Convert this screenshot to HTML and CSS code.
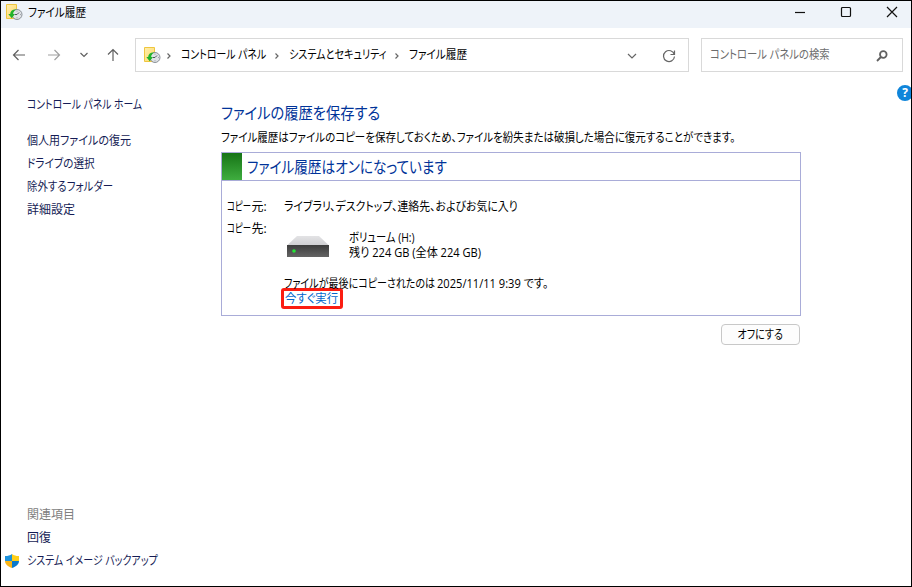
FILE: index.html
```html
<!DOCTYPE html>
<html lang="ja">
<head>
    <meta charset="UTF-8">
    <meta name="viewport" content="width=device-width, initial-scale=1.0">
    <title>ファイル履歴</title>
    <link rel="stylesheet" href="styles.css">
</head>
<body>
    <svg class="defs" width="0" height="0">
        <defs>
            <linearGradient id="folderFill" x1="0" y1="0" x2="1" y2="1">
                <stop offset="0" stop-color="#ffeeae"/>
                <stop offset="1" stop-color="#ffd968"/>
            </linearGradient>
            <symbol id="historyIcon" viewBox="0 0 17 17">
                <path d="M.5.5h10v14H.5z" fill="url(#folderFill)" stroke="#eec63f" stroke-width="1"/>
                <circle cx="11" cy="10.500" r="5" fill="#dfe2e6" stroke="#8b9198" stroke-width="1"/>
                <path d="M11 10.500l2-2M11 10.500H9" fill="none" stroke="#4d535a" stroke-width="1"/>
                <path d="M11 6.800v.8M11 13.400v.8M14 10.500h.8" fill="none" stroke="#7b8188" stroke-width=".8"/>
                <path d="M10.500 5.500C6.500 5 4.200 7 4.200 10H2.300l3.400 4.300L9 10H7.200c0-2 1-3.500 3.300-4.500z" fill="#22b32b" stroke="none"/>
            </symbol>
        </defs>
    </svg>

    <div class="window">
        <header class="titlebar">
            <svg class="app-icon" width="17" height="17"><use href="#historyIcon"/></svg>
            <span class="text window-title">ファイル履歴</span>
            <div class="window-buttons">
                <svg width="12" height="12" viewBox="0 0 12 12"><path d="M1 6.500h10"/></svg>
                <svg width="12" height="12" viewBox="0 0 12 12"><rect x="1.500" y="1.500" width="9" height="9" rx="1"/></svg>
                <svg width="12" height="12" viewBox="0 0 12 12"><path d="M1 1l10 10M11 1L1 11"/></svg>
            </div>
        </header>

        <nav class="toolbar">
            <div class="nav-buttons">
                <svg width="14" height="14" viewBox="0 0 14 14"><path d="M13 7H1.500M6.500 2l-5 5 5 5"/></svg>
                <svg class="disabled" width="14" height="14" viewBox="0 0 14 14"><path d="M1 7h11.500M7.500 2l5 5-5 5"/></svg>
                <svg class="small" width="10" height="14" viewBox="0 0 10 14"><path d="M1.500 5L5 8.500 8.500 5"/></svg>
                <svg width="14" height="14" viewBox="0 0 14 14"><path d="M7 13V1.500M2 6.500l5-5 5 5"/></svg>
            </div>
            <div class="address">
                <svg width="17" height="17"><use href="#historyIcon"/></svg>
                <svg class="crumb-arrow" width="6" height="8" viewBox="0 0 6 8"><path d="M1.500 1.500L4 4 1.500 6.500"/></svg>
                <span class="text crumb-panel">コントロール パネル</span>
                <svg class="crumb-arrow" width="6" height="8" viewBox="0 0 6 8"><path d="M1.500 1.500L4 4 1.500 6.500"/></svg>
                <span class="text crumb-system">システムとセキュリティ</span>
                <svg class="crumb-arrow" width="6" height="8" viewBox="0 0 6 8"><path d="M1.500 1.500L4 4 1.500 6.500"/></svg>
                <span class="text crumb-history">ファイル履歴</span>
                <svg class="drop" width="10" height="8" viewBox="0 0 10 8"><path d="M1 2l4 4 4-4"/></svg>
                <svg class="refresh" width="14" height="14" viewBox="0 0 14 14"><path d="M12.300 5.500A5.500 5.500 0 1 0 12.500 7.500M12.500 1.500v4h-4"/></svg>
            </div>
            <div class="search">
                <span class="text search-text">コントロール パネルの検索</span>
                <svg width="12" height="12" viewBox="0 0 12 12"><circle cx="7.300" cy="4.500" r="3.300"/><path d="M4.900 7L1 11"/></svg>
            </div>
        </nav>

        <div class="content">
            <aside class="sidebar">
                <a class="text home">コントロール パネル ホーム</a>
                <a class="text restore">個人用ファイルの復元</a>
                <a class="text drive">ドライブの選択</a>
                <a class="text exclude">除外するフォルダー</a>
                <a class="text">詳細設定</a>
                <div class="related">
                    <span class="related-title">関連項目</span>
                    <a class="text">回復</a>
                    <a class="backup">
                        <svg width="14" height="14" viewBox="0 0 14 14">
                            <path d="M7 0C5 1.500 3 2 0 2v5h7z" fill="#1d92dc"/>
                            <path d="M7 0c2 1.500 4 2 7 2v5H7z" fill="#ffcf19"/>
                            <path d="M0 7c0 3.500 3 5.500 7 7V7z" fill="#f9b418"/>
                            <path d="M14 7c0 3.500-3 5.500-7 7V7z" fill="#0b79cb"/>
                        </svg>
                        <span class="text backup-text">システム イメージ バックアップ</span>
                    </a>
                </div>
            </aside>

            <main class="main">
                <h1><span class="text heading">ファイルの履歴を保存する</span></h1>
                <p class="lead"><span class="text lead-text">ファイル履歴はファイルのコピーを保存しておくため、ファイルを紛失または破損した場合に復元することができます。</span></p>
                <section class="status">
                    <div class="status-head">
                        <span class="status-mark"></span>
                        <span class="text status-title">ファイル履歴はオンになっています</span>
                    </div>
                    <div class="status-body">
                        <div class="row">
                            <span class="label"><span class="text copy">コピー</span>元:</span>
                            <span class="text sources">ライブラリ、デスクトップ、連絡先、およびお気に入り</span>
                        </div>
                        <div class="row target">
                            <span class="label"><span class="text copy">コピー</span>先:</span>
                            <div class="target-drive">
                                <svg width="42" height="23" viewBox="0 0 42 23">
                                    <defs>
                                        <linearGradient id="driveTop" x1="0" y1="0" x2="0" y2="1">
                                            <stop offset="0" stop-color="#e3e3e5"/>
                                            <stop offset="1" stop-color="#d0d0d3"/>
                                        </linearGradient>
                                        <linearGradient id="driveFront" x1="0" y1="0" x2="0" y2="1">
                                            <stop offset="0" stop-color="#3d3d3d"/>
                                            <stop offset="1" stop-color="#646464"/>
                                        </linearGradient>
                                    </defs>
                                    <path d="M10 0h22l9.500 9H.5z" fill="url(#driveTop)"/>
                                    <path d="M0 9h42v12H0z" fill="url(#driveFront)"/>
                                    <circle cx="7" cy="15" r="1.800" fill="#23e436"/>
                                </svg>
                                <div class="drive-info">
                                    <span class="text volume">ボリューム (H:)</span>
                                    <span class="text space">残り 224 GB (全体 224 GB)</span>
                                </div>
                            </div>
                        </div>
                        <div class="last-copy">
                            <div class="last-text">
                                <span class="text last-label">ファイルが最後にコピーされたのは</span>
                                <span class="text last-date">2025/11/11 9:39 です。</span>
                            </div>
                            <a class="run-now"><span class="text run-text">今すぐ実行</span></a>
                        </div>
                    </div>
                </section>
                <div class="actions">
                    <button><span class="text off-text">オフにする</span></button>
                </div>
            </main>
            <span class="help">?</span>
        </div>
    </div>
</body>
</html>
```

FILE: styles.css
```css
* {
    box-sizing: border-box;
}
body {
    margin: 0;
    font-family: "Open Sans", "Noto Sans CJK JP", sans-serif;
    font-size: 12px;
    line-height: 16px;
    font-feature-settings: "palt";
    white-space: nowrap;
    color: #000;
}
h1, p {
    margin: 0;
    font-weight: normal;
}
svg {
    display: block;
    flex: none;
    fill: none;
    stroke-width: 1.2;
}
.defs {
    position: absolute;
}

/* Condensed UI lettering, narrower where a text is mostly kana */
.text {
    display: inline-block;
    flex: none;
    transform-origin: left center;
}
.window-title,
.crumb-history {
    transform: scaleX(0.885);
}
.crumb-panel {
    width: 88px;
    transform: scaleX(0.825);
}
.crumb-system {
    width: 100px;
    transform: scaleX(0.838);
}
.search-text {
    transform: scaleX(0.862);
}
.home {
    transform: scaleX(0.818);
}
.restore {
    transform: scaleX(0.92);
}
.drive {
    transform: scaleX(0.883);
}
.exclude {
    transform: scaleX(0.87);
}
.backup-text {
    transform: scaleX(0.83);
}
.heading {
    transform: scaleX(0.892);
}
.lead-text {
    transform: scaleX(0.874);
}
.status-title {
    transform: scaleX(0.852);
}
.copy {
    margin-right: -10px;
    transform: scaleX(0.7);
}
.sources {
    transform: scaleX(0.907);
}
.volume {
    transform: scaleX(0.857);
}
.space {
    transform: scaleX(0.925);
}
.last-label {
    width: 153px;
    transform: scaleX(0.835);
}
.last-date {
    transform: scaleX(0.925);
}
.run-text {
    transform: scaleX(0.95);
}
.off-text {
    transform: scaleX(0.84);
    transform-origin: center;
}

.window {
    display: flex;
    flex-direction: column;
    width: 912px;
    height: 587px;
    border: 1px solid #000;
    background: #fff;
    overflow: hidden;
}

/* Title bar */
.titlebar {
    display: flex;
    align-items: center;
    height: 27px;
    padding: 0 13px 4px 5px;
    background: #eef3f9;
}
.window-title {
    margin-left: 5px;
}
.window-buttons {
    display: flex;
    gap: 34px;
    margin-left: auto;
    stroke: #111;
}
.window-buttons svg {
    margin-top: -1px;
}

/* Toolbar */
.toolbar {
    display: flex;
    align-items: center;
    height: 54px;
    padding: 0 8px 0 11px;
}
.nav-buttons {
    display: flex;
    width: 123px;
    stroke: #606060;
}
.nav-buttons svg {
    margin-right: 21px;
}
.nav-buttons .small {
    margin-right: 17px;
    margin-left: -3px;
}
.nav-buttons .disabled {
    stroke: #a0a0a0;
}
.address,
.search {
    display: flex;
    align-items: center;
    height: 34px;
    border: 1px solid #d9d9d9;
}
.address {
    width: 554px;
    padding: 0 12px 0 8px;
    stroke: #666;
}
.crumb-arrow {
    margin: 1px 9px 0 5px;
}
.drop {
    margin: 2px 0 0 auto;
}
.refresh {
    margin: 2px 0 0 25px;
}
.search {
    width: 202px;
    margin-left: 12px;
    padding: 0 14px 0 8px;
    color: #6d6d6d;
}
.search svg {
    margin: 1px 0 0 auto;
    stroke: #606060;
    stroke-width: 1.8;
}

/* Content */
.content {
    position: relative;
    display: flex;
    flex: 1;
}
.sidebar {
    display: flex;
    flex-direction: column;
    align-items: flex-start;
    width: 220px;
    padding: 15px 0 17px 26px;
    color: #151c55;
}
.sidebar a {
    margin-bottom: 7px;
}
.sidebar .home {
    margin-bottom: 20px;
}
.related {
    display: flex;
    flex-direction: column;
    align-items: flex-start;
    margin-top: auto;
}
.related-title {
    margin-bottom: 7px;
    color: #808080;
}
.sidebar .backup {
    display: flex;
    align-items: center;
    gap: 8px;
    margin: 0 0 0 -22px;
}
.main {
    width: 580px;
    padding-top: 20px;
}
h1 {
    height: 26px;
    font-size: 16px;
    line-height: 22px;
    color: #003399;
}
.lead {
    height: 24px;
    line-height: 20px;
}
.status {
    height: 164px;
    border: 1px solid #a9acd8;
}
.status-head {
    display: flex;
    align-items: center;
    height: 28px;
    border-bottom: 1px solid #a9acd8;
    font-size: 16px;
    color: #003399;
}
.status-mark {
    width: 20px;
    height: 27px;
    margin-right: 5px;
    background: linear-gradient(#167416, #3fad3f);
}
.status-body {
    padding: 18px 0 0 5px;
}
.row {
    display: flex;
    height: 22px;
}
.label {
    width: 57px;
}
.target {
    height: 55px;
}
.target-drive {
    display: flex;
    padding: 9px 0 0 3px;
}
.target-drive svg {
    margin-top: 6px;
}
.drive-info {
    display: flex;
    flex-direction: column;
    align-items: flex-start;
    margin-left: 20px;
    line-height: 15px;
}
.last-copy {
    display: flex;
    flex-direction: column;
    align-items: flex-start;
    padding-left: 54px;
    line-height: 15px;
}
.last-text {
    display: flex;
    margin-left: 3px;
}
.run-now {
    width: 62px;
    height: 21px;
    margin-top: -3px;
    padding-left: 1px;
    border: 3px solid #fb1d12;
    border-radius: 3px;
    color: #0066cc;
}
.actions {
    display: flex;
    justify-content: flex-end;
    padding: 8px 1px 0 0;
}
button {
    width: 79px;
    height: 21px;
    padding: 0;
    border: 1px solid #c8c8c8;
    border-radius: 4px;
    background: #fdfdfd;
    font: inherit;
    color: #000;
}
.help {
    position: absolute;
    top: 3px;
    right: -2px;
    width: 16px;
    height: 16px;
    border-radius: 50%;
    background: #0f85da;
    font-weight: bold;
    text-align: center;
    color: #fff;
}
```
